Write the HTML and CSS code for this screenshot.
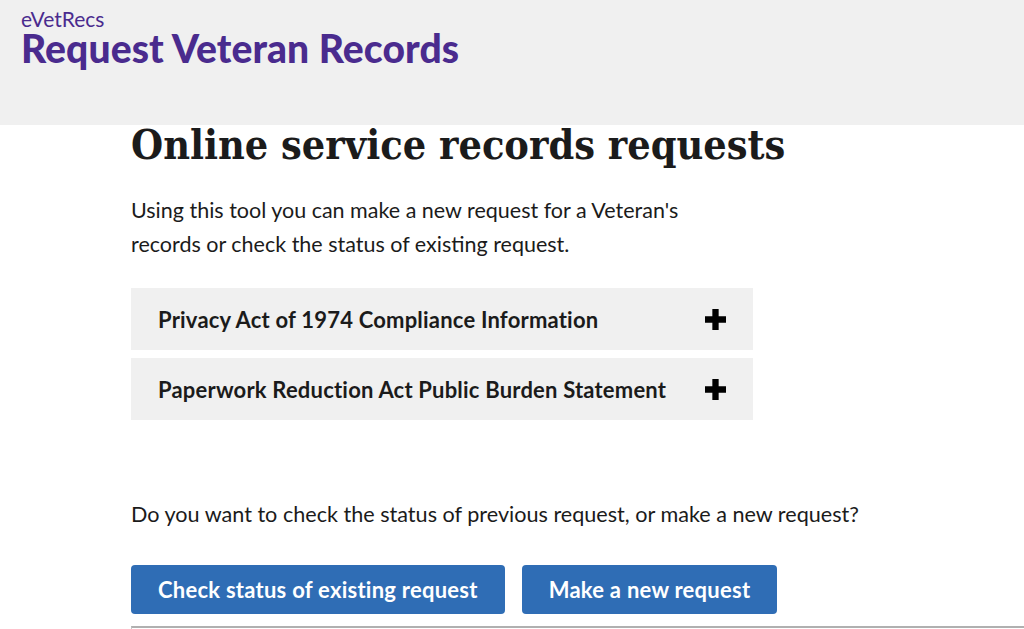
FILE: index.html
```html
<!DOCTYPE html>
<html>
<head>
  <meta charset="utf-8">
  <meta name="viewport" content="width=device-width, initial-scale=1">
  <title>eVetRecs - Request Veteran Records</title>
  <link rel="stylesheet" href="styles.css">
</head>
<body class="vr-page">

<header class="vr-header">
  <div class="vr-brand">
    <span class="vr-site">eVetRecs</span>
    <span class="vr-title">Request Veteran Records</span>
  </div>
</header>

<main class="vr-main">
  <h1 class="vr-heading">Online service records requests</h1>
  <p class="vr-intro">Using this tool you can make a new request for a Veteran's<br>records or check the status of existing request.</p>

  <div class="vr-accordion">
    <button class="vr-acc-btn" type="button">
      <span>Privacy Act of 1974 Compliance Information</span>
      <svg class="vr-plus" viewBox="0 0 20 20" width="20" height="20" aria-hidden="true"><path d="M7 0h6v7h7v6h-7v7H7v-7H0V7h7z"/></svg>
    </button>
    <button class="vr-acc-btn" type="button">
      <span>Paperwork Reduction Act Public Burden Statement</span>
      <svg class="vr-plus" viewBox="0 0 20 20" width="20" height="20" aria-hidden="true"><path d="M7 0h6v7h7v6h-7v7H7v-7H0V7h7z"/></svg>
    </button>
  </div>

  <p class="vr-question">Do you want to check the status of previous request, or make a new request?</p>

  <div class="vr-actions">
    <button class="vr-btn" type="button">Check status of existing request</button>
    <button class="vr-btn" type="button">Make a new request</button>
  </div>

  <div class="vr-panel"></div>
</main>

</body>
</html>
```

FILE: styles.css
```css
*,
*::before,
*::after {
  box-sizing: border-box;
}

.vr-page {
  margin: 0;
  padding: 0;
  font-family: Lato, "Open Sans", sans-serif;
  color: #1b1b1b;
  background: #fff;
  height: 629px;
  overflow: hidden;
}

.vr-header {
  background: #f0f0f0;
  height: 125px;
  padding: 8px 21px 0;
}

.vr-brand {
  display: flex;
  flex-direction: column;
  color: #4a2b8e;
}

.vr-site {
  font-size: 21px;
  line-height: 21px;
}

.vr-title {
  font-size: 39px;
  line-height: 39px;
  font-weight: 900;
  letter-spacing: 0.1px;
}

.vr-main {
  padding: 0 0 0 131px;
}

.vr-heading {
  font-family: "DejaVu Serif Condensed", "DejaVu Serif", serif;
  font-size: 41px;
  line-height: 52px;
  margin: -6px 0 22px;
  font-weight: bold;
}

.vr-intro {
  font-size: 21.5px;
  line-height: 34px;
  margin: 0 0 27px;
}

.vr-accordion {
  width: 622px;
  display: flex;
  flex-direction: column;
  gap: 8px;
}

.vr-acc-btn {
  display: flex;
  align-items: center;
  justify-content: space-between;
  height: 62px;
  padding: 0 27px 0 27px;
  border: none;
  background: #f0f0f0;
  font-family: inherit;
  font-size: 22px;
  font-weight: bold;
  letter-spacing: 0.2px;
  color: #1b1b1b;
  text-align: left;
}

.vr-plus {
  fill: #000;
  width: 21px;
  height: 21px;
}

.vr-question {
  font-size: 21.6px;
  line-height: 30px;
  margin: 79px 0 36px;
}

.vr-actions {
  display: flex;
  gap: 17px;
}

.vr-btn {
  height: 49px;
  padding: 0 27px;
  border: none;
  border-radius: 4px;
  background: #2f6db5;
  color: #fff;
  font-family: inherit;
  font-size: 22px;
  font-weight: bold;
  letter-spacing: 0.25px;
}

.vr-panel {
  margin-top: 12px;
  height: 40px;
  border-top: 2px solid #b0b0b0;
  border-left: 1px solid #c8c8c8;
}
```
